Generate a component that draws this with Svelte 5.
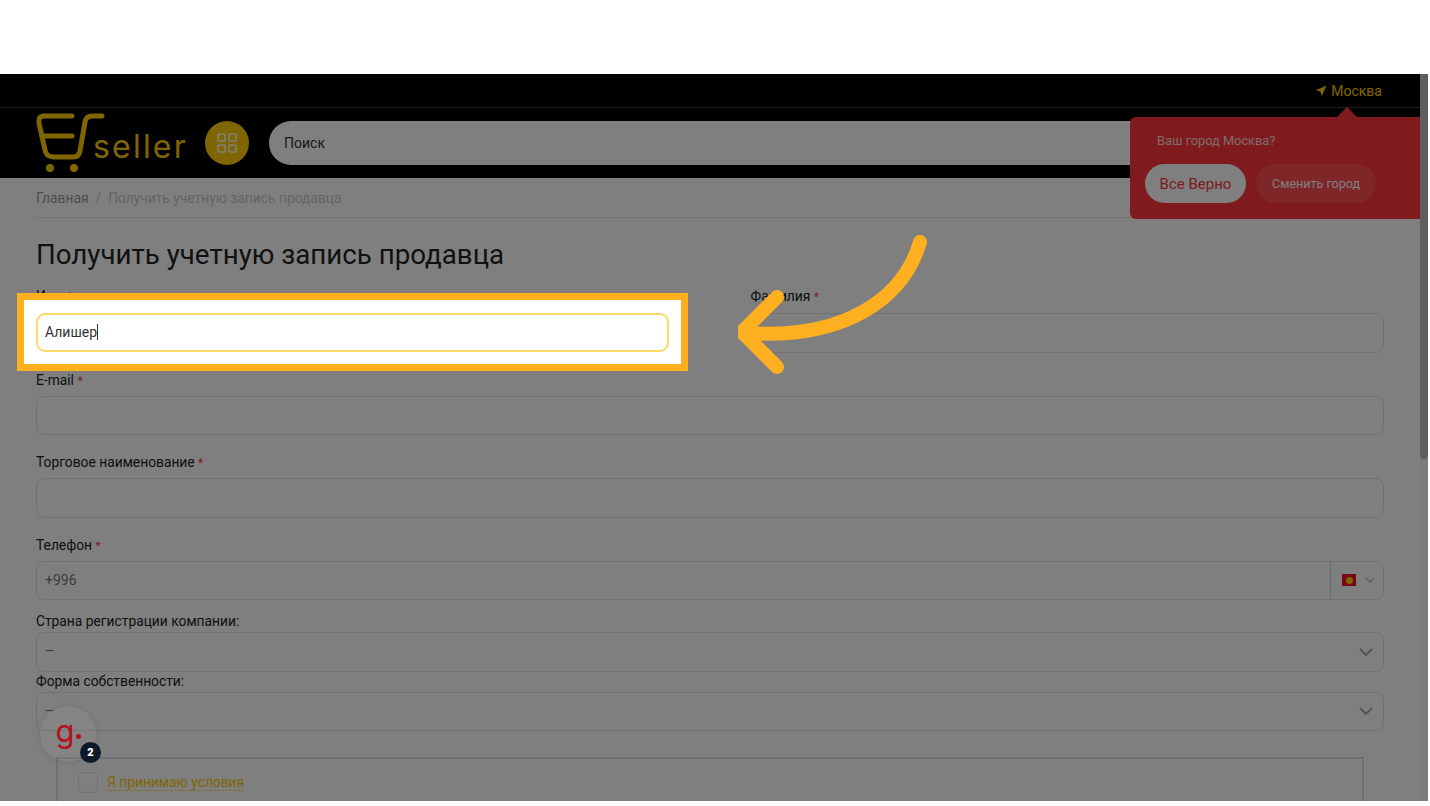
<script>
    const grid = [[0, 0], [11, 0], [0, 11], [11, 11]];
</script>

<div class="shot">
    <div class="page">
        <div class="topbar">
            <span class="city">
                <svg width="12" height="12" viewBox="0 0 12 12"><path d="M11.5 .5 .8 5.2l4.6 1.4 1.4 4.6z" fill="currentColor" /></svg>
                Москва
            </span>
        </div>

        <header class="header">
            <div class="logo">
                <svg width="72" height="62" viewBox="0 0 72 62" fill="none">
                    <g stroke="#ffcc00" stroke-width="5" stroke-linecap="round" stroke-linejoin="round">
                        <path d="M36 3H8Q2 3 3 10L9 37Q10 44 18 44H37Q43 44 44 38L49 9Q50 3 56 3H66" />
                        <path d="M6 23H36" />
                    </g>
                    <circle cx="14" cy="55" r="4" fill="#ffcc00" />
                    <circle cx="38" cy="55" r="4" fill="#ffcc00" />
                </svg>
                <span class="logo-text">seller</span>
            </div>
            <button class="catalog" aria-label="Каталог">
                <svg width="20" height="20" viewBox="0 0 20 20" fill="none" stroke="#fff" stroke-width="1.6">
                    {#each grid as [x, y]}
                        <rect x={x + 1} y={y + 1} width="7" height="7" rx="1" />
                    {/each}
                </svg>
            </button>
            <div class="search">Поиск</div>
        </header>

        <div class="content">
            <div class="breadcrumb">
                <span class="crumb">Главная</span>
                <span class="sep">/</span>
                <span class="current">Получить учетную запись продавца</span>
            </div>

            <h1>Получить учетную запись продавца</h1>

            <div class="row">
                <div>
                    <div class="label first">Имя <b>*</b></div>
                    <div class="input"></div>
                </div>
                <div>
                    <div class="label first">Фамилия <b>*</b></div>
                    <div class="input"></div>
                </div>
            </div>

            <div class="label">E-mail <b>*</b></div>
            <div class="input"></div>

            <div class="label">Торговое наименование <b>*</b></div>
            <div class="input"></div>

            <div class="label">Телефон <b>*</b></div>
            <div class="input phone">
                <span>+996</span>
                <div class="country">
                    <span class="flag"><i></i></span>
                    <svg width="10" height="6" viewBox="0 0 10 6" fill="none" stroke="#bbb" stroke-width="1.3"><path d="M1 1l4 4 4-4" /></svg>
                </div>
            </div>

            <div class="label small first-small">Страна регистрации компании:</div>
            <div class="input select">
                <span>–</span>
                <svg width="14" height="8" viewBox="0 0 14 8" fill="none" stroke="#aaa" stroke-width="2"><path d="M1 1l6 6 6-6" /></svg>
            </div>

            <div class="label small">Форма собственности:</div>
            <div class="input select">
                <span>–</span>
                <svg width="14" height="8" viewBox="0 0 14 8" fill="none" stroke="#aaa" stroke-width="2"><path d="M1 1l6 6 6-6" /></svg>
            </div>

            <div class="terms">
                <span class="check"></span>
                <span class="terms-link">Я принимаю условия</span>
            </div>
        </div>

        <div class="popup">
            <p>Ваш город Москва?</p>
            <div class="popup-buttons">
                <button class="yes">Все Верно</button>
                <button class="change">Сменить город</button>
            </div>
        </div>
        <div class="dim"></div>
    </div>

    <div class="scrollbar"><div class="thumb"></div></div>

    <div class="highlight">
        <div class="input focused">Алишер<span class="caret"></span></div>
    </div>

    <svg class="arrow" width="200" height="150" viewBox="0 0 200 150" fill="none" stroke="#ffb020" stroke-width="14" stroke-linecap="round" stroke-linejoin="round">
        <path d="M182 8C165 66 105 106 7 99" />
        <path d="M39 63 4 98 39 133" />
    </svg>

    <div class="widget">
        <span class="g">g<i></i></span>
        <span class="badge">2</span>
    </div>
</div>

<style>
    :global(body) {
        background: #fff;
        font-family: Roboto, "Noto Sans", sans-serif;
    }

    .shot {
        position: relative;
        display: flex;
        width: 1428px;
        height: 727px;
        margin-top: 74px;
        overflow: hidden;
    }

    .page {
        position: relative;
        flex: 1;
        min-width: 0;
        background: #fff;
    }

    .dim {
        position: absolute;
        inset: 0;
        background: rgba(0, 0, 0, 0.5);
    }

    .topbar {
        display: flex;
        justify-content: flex-end;
        align-items: center;
        height: 33px;
        padding-right: 38px;
        background: #000;
        border-bottom: 1px solid #3a3a3a;
    }

    .city {
        display: flex;
        align-items: center;
        gap: 4px;
        color: #ffcc00;
        font-size: 14px;
    }

    .header {
        display: flex;
        align-items: center;
        height: 70px;
        padding-left: 36px;
        background: #000;
    }

    .logo {
        display: flex;
        align-items: flex-end;
        width: 169px;
        height: 62px;
        margin-top: 2px;
    }

    .logo svg {
        flex: none;
        margin-right: -15px;
    }

    .logo-text {
        margin-bottom: 9px;
        color: #ffcc00;
        font-family: Inter, sans-serif;
        font-size: 32px;
        line-height: 1.2;
        letter-spacing: 2.2px;
    }

    .catalog {
        display: flex;
        align-items: center;
        justify-content: center;
        width: 44px;
        height: 44px;
        padding: 0;
        border: none;
        border-radius: 50%;
        background: #ffcc00;
    }

    .search {
        flex: 1;
        height: 44px;
        margin-left: 20px;
        margin-right: 60px;
        padding-left: 15px;
        border-radius: 22px;
        background: #fff;
        color: #333;
        font-size: 14px;
        line-height: 44px;
    }

    .content {
        padding: 0 36px;
        color: #222;
    }

    .breadcrumb {
        display: flex;
        gap: 7px;
        padding: 11px 0 9px;
        border-bottom: 1px solid #e4e4e4;
        font-size: 13.8px;
        line-height: 19px;
    }

    .crumb {
        color: #999;
    }

    .sep,
    .current {
        color: #c8c8c8;
    }

    h1 {
        margin: 20px 0 14px;
        font-size: 27.7px;
        font-weight: 400;
        line-height: 34px;
    }

    .row {
        display: grid;
        grid-template-columns: 1fr 1fr;
        gap: 81px;
    }

    .label {
        margin: 17px 0 6px;
        font-size: 13.8px;
        line-height: 20px;
    }

    .label b {
        color: #ff4040;
        font-size: 12px;
        font-weight: 400;
        line-height: 0;
    }

    .label.first {
        margin: 0 0 7px;
    }

    .label.small {
        margin: 0 0 2px;
        line-height: 18px;
    }

    .label.first-small {
        margin-top: 12px;
    }

    .input {
        box-sizing: border-box;
        height: 39.5px;
        border: 1px solid #e2e2e2;
        border-radius: 8px;
        font-size: 14px;
        line-height: 37px;
    }

    .phone,
    .select {
        display: flex;
        justify-content: space-between;
        align-items: center;
        padding-left: 8px;
        color: #777;
    }

    .select {
        padding-right: 10px;
    }

    .country {
        display: flex;
        align-items: center;
        gap: 9px;
        box-sizing: border-box;
        width: 53px;
        height: 100%;
        padding-left: 11px;
        border-left: 1px solid #d4d4d4;
    }

    .flag {
        display: flex;
        align-items: center;
        justify-content: center;
        width: 14px;
        height: 12px;
        background: #f0102c;
    }

    .flag i {
        width: 7px;
        height: 7px;
        border-radius: 50%;
        background: #ffc800;
    }

    .terms {
        display: flex;
        align-items: flex-start;
        gap: 9px;
        height: 60px;
        margin: 26px 20px 0;
        padding: 13px 20px 0;
        border: 2px solid #d4e0ea;
        border-bottom: none;
    }

    .check {
        box-sizing: border-box;
        width: 20px;
        height: 21px;
        border: 1px solid #e2e2e2;
        border-radius: 5px;
    }

    .terms-link {
        margin-top: 2px;
        color: #ffcc00;
        font-size: 13.8px;
        line-height: 16px;
        border-bottom: 1px dotted #ffcc00;
    }

    .popup {
        position: absolute;
        top: 43px;
        left: 1130px;
        box-sizing: border-box;
        width: 290px;
        height: 102px;
        padding: 15px 0 0 15px;
        border-radius: 6px 0 0 6px;
        background: #ff343c;
    }

    .popup::before {
        content: '';
        position: absolute;
        top: -10px;
        left: 207px;
        width: 0;
        height: 0;
        border: 10px solid transparent;
        border-top: none;
        border-bottom-color: #ff343c;
    }

    .popup p {
        margin: 0 0 14px 12px;
        color: #fff;
        font-size: 12.8px;
        line-height: 18px;
        opacity: 0.8;
    }

    .popup-buttons {
        display: flex;
        gap: 10px;
    }

    .popup button {
        height: 39px;
        padding: 0;
        border: none;
        border-radius: 20px;
        font-family: inherit;
    }

    .yes {
        width: 101px;
        background: #fff;
        color: #ff343c;
        font-size: 15px;
    }

    .change {
        width: 120px;
        background: rgba(255, 255, 255, 0.12);
        color: #fff;
        font-size: 12.5px;
    }

    .scrollbar {
        flex: none;
        width: 8px;
        background: #7b7b7b;
    }

    .thumb {
        height: 385px;
        border-radius: 0 0 4px 4px;
        background: #5f5f5f;
    }

    .highlight {
        position: absolute;
        top: 219px;
        left: 17px;
        box-sizing: border-box;
        width: 671px;
        height: 78px;
        padding: 13px 12px 12px;
        border: 7px solid #ffb020;
        background: #fff;
    }

    .input.focused {
        height: 39px;
        padding-left: 7px;
        border: 2px solid #ffd966;
        border-radius: 9px;
        color: #333;
        line-height: 35px;
    }

    .caret {
        display: inline-block;
        width: 1px;
        height: 16px;
        vertical-align: -3px;
        background: #333;
    }

    .arrow {
        position: absolute;
        top: 160px;
        left: 738px;
    }

    .widget {
        position: absolute;
        top: 632px;
        left: 40px;
        display: flex;
        align-items: center;
        justify-content: center;
        width: 56px;
        height: 56px;
        border-radius: 50%;
        background: rgba(255, 255, 255, 0.04);
        box-shadow: 0 1px 6px rgba(0, 0, 0, 0.12);
    }

    .g {
        display: flex;
        align-items: flex-end;
        margin-top: -8px;
        color: #b5101e;
        font-family: Inter, sans-serif;
        font-size: 31px;
        line-height: 1;
    }

    .g i {
        width: 5px;
        height: 5px;
        margin: 0 0 7px 1px;
        border-radius: 50%;
        background: #b5101e;
    }

    .badge {
        position: absolute;
        right: -5px;
        bottom: -1px;
        width: 21px;
        height: 21px;
        border-radius: 50%;
        background: #0e1a2c;
        color: #fff;
        font-size: 11px;
        font-weight: 900;
        line-height: 21px;
        text-align: center;
    }
</style>
